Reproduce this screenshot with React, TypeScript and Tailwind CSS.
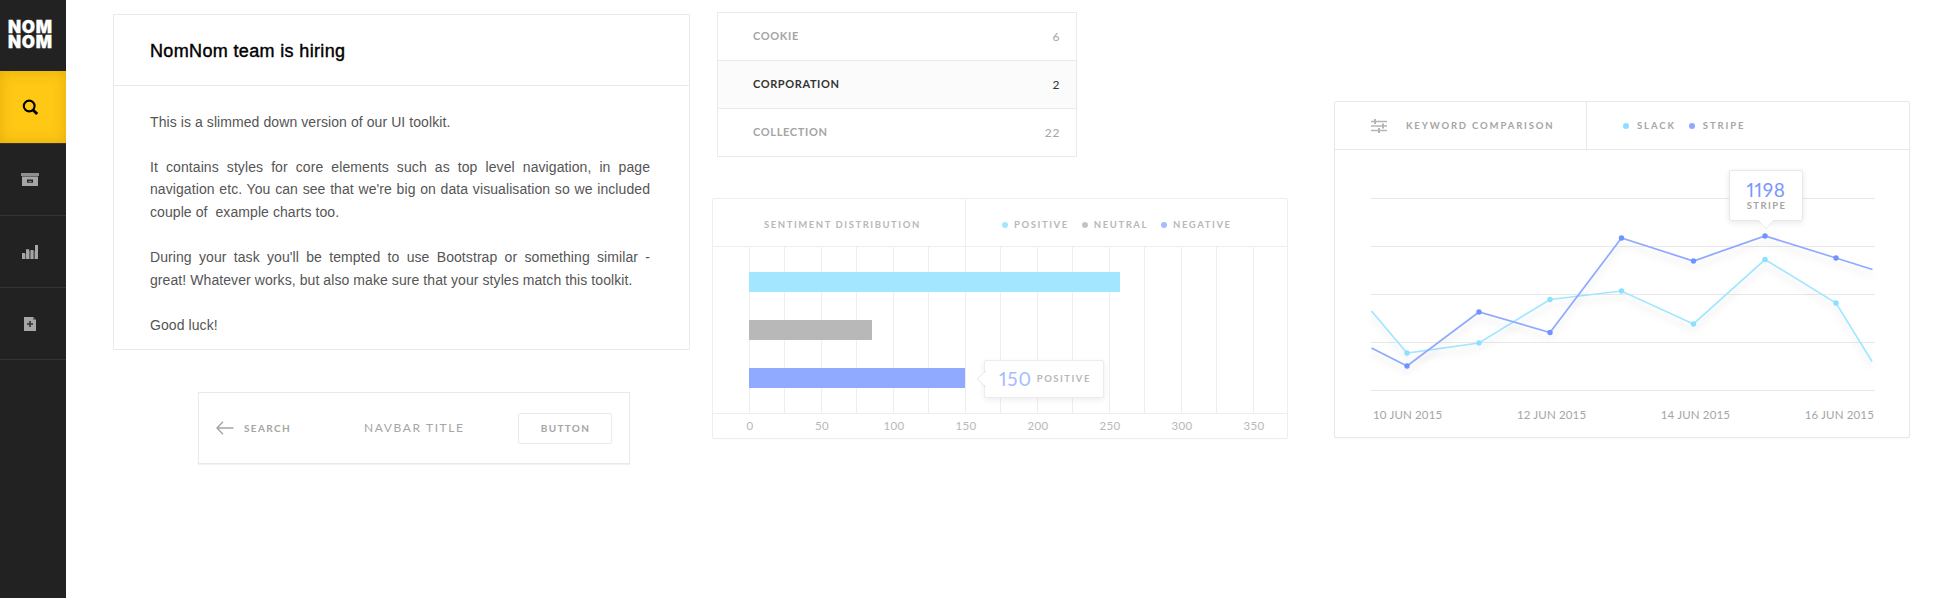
import React from "react";

type NavItem = { icon: React.ReactNode; active?: boolean };

const navItems: NavItem[] = [
  {
    active: true,
    icon: (
      <svg width="17" height="17" viewBox="0 0 17 17" className="block" fill="none" stroke="#000">
        <circle cx="7.2" cy="7" r="5.4" strokeWidth="2.1" />
        <path d="M11 11 15.200 15" strokeWidth="3" />
      </svg>
    ),
  },
  {
    icon: (
      <svg width="18" height="13" viewBox="0 0 18 13" className="block">
        <path d="M0 0h18v3H0z" fill="#8f8f8f" />
        <path d="M1 3h16v10H1z" fill="#a6a6a6" />
        <path d="M1 3h16v1H1z" fill="#666" />
        <path d="M6 6.500h6v3.200H6z" fill="#222" />
        <path d="M7.300 7.900h3.400v1H7.300z" fill="#8a8a8a" />
      </svg>
    ),
  },
  {
    icon: (
      <svg width="16" height="14" viewBox="0 0 16 14" className="block">
        <path d="M3 9h1v5H3zM7 6h1.500v8H7zM11.500 6h1.500v8h-1.500z" fill="#555" />
        <path d="M0 8h3v6H0zM4 4.300h3.200V14H4zM8.500 5h3v9h-3zM13 0h3v14h-3z" fill="#a6a6a6" />
      </svg>
    ),
  },
  {
    icon: (
      <svg width="12" height="14" viewBox="0 0 12 14" className="block">
        <path d="M0 0h9.500v2.500H12V14H0z" fill="#a6a6a6" />
        <path d="M9.500 0 12 2.500H9.500z" fill="#666" />
        <path d="M6 4v6M3 7h6" stroke="#333" strokeWidth="1.600" />
      </svg>
    ),
  },
];

function Sidebar() {
  return (
    <nav className="flex w-[66px] shrink-0 flex-col bg-[#222]">
      <div className="h-[71px] pl-[8px] pt-[20px] font-[Inter,sans-serif] text-[17px] font-black leading-[15px] tracking-[0.7px] text-white [-webkit-text-stroke:0.3px_#fff]">
        NOM
        <br />
        NOM
      </div>
      {navItems.map((item, i) => (
        <div
          key={i}
          className={
            item.active
              ? "flex h-[72px] items-center justify-center bg-[#ffc814] pr-[5px] shadow-[inset_0_0_14px_rgba(160,110,0,0.3)]"
              : "flex h-[72px] items-center justify-center border-t border-[#353535] pr-[6px]"
          }
        >
          {item.icon}
        </div>
      ))}
      <div className="border-t border-[#353535]" />
    </nav>
  );
}

function HiringCard() {
  return (
    <article className="h-[336px] w-[577px] border border-[#eaeaea] font-['Liberation_Sans',Arial,sans-serif]">
      <h1 className="flex h-[71px] items-center border-b border-[#eaeaea] pl-[36px] pt-[2px] text-[18px] font-medium tracking-[0.35px] text-black [-webkit-text-stroke:0.4px_#000]">
        NomNom team is hiring
      </h1>
      <div className="flex w-[536px] flex-col gap-[22.6px] pl-[36px] pt-[24.7px] text-justify text-[14px] leading-[22.6px] tracking-[0.08px] text-[#555]">
        <p>This is a slimmed down version of our UI toolkit.</p>
        <p>
          It contains styles for core elements such as top level navigation, in page navigation etc. You can see that
          we're big on data visualisation so we included couple of&nbsp; example charts too.
        </p>
        <p>
          During your task you'll be tempted to use Bootstrap or something similar&nbsp;-
          great!&nbsp;Whatever works, but also make sure that your styles match this toolkit.
        </p>
        <p>Good luck!</p>
      </div>
    </article>
  );
}

function Navbar() {
  return (
    <header className="ml-[85px] mt-[42px] flex h-[72px] w-[432px] items-center border border-[#eaeaea] px-[17px] text-[#a5a5a5] shadow-[0_1px_1px_rgba(0,0,0,0.05)]">
      <div className="flex w-[148px] items-center gap-[10px]">
        <svg width="18" height="14" viewBox="0 0 18 14" fill="none" stroke="#a5a5a5" strokeWidth="1.4">
          <path d="M17.5 7H1M7 .7 1 7l6 6.300" />
        </svg>
        <span className="text-[10px] font-bold tracking-[1.35px]">SEARCH</span>
      </div>
      <span className="flex-1 text-[12px] tracking-[1.6px]">NAVBAR TITLE</span>
      <button className="h-[31px] w-[94px] rounded-[2px] border border-[#eaeaea] pl-px text-[10px] font-bold tracking-[1.3px]">
        BUTTON
      </button>
    </header>
  );
}

const keywords = [
  { name: "COOKIE", count: 6 },
  { name: "CORPORATION", count: 2, selected: true },
  { name: "COLLECTION", count: 22 },
];

function KeywordList() {
  return (
    <ul className="ml-[5px] h-[145px] w-[360px] divide-y divide-[#eaeaea] border border-[#eaeaea]">
      {keywords.map((k) => (
        <li
          key={k.name}
          className={
            k.selected
              ? "flex h-[48px] items-center justify-between bg-[#fbfbfb] pl-[35px] pr-[16px] text-[11px] tracking-[0.6px] text-[#333]"
              : "flex h-[48px] items-center justify-between pl-[35px] pr-[16px] text-[11px] tracking-[0.65px] text-[#a5a5a5] last:h-[47px]"
          }
        >
          <span className="font-bold">{k.name}</span>
          <span className="text-[12px]">{k.count}</span>
        </li>
      ))}
    </ul>
  );
}

function Legend({ color, label }: { color: string; label: string }) {
  return (
    <span className="flex items-center">
      <i className="mb-[1px] mr-[6px] size-[6px] rounded-full" style={{ backgroundColor: color }} />
      {label}
    </span>
  );
}

const gridX = [37, 72, 109, 144, 181, 216, 253, 288, 325, 360, 397, 432, 469, 504, 541];
const bars = [
  { value: 371, color: "#a2e6ff" },
  { value: 123, color: "#b8b8b8" },
  { value: 216, color: "#90aaff" },
];

function SentimentChart() {
  return (
    <section className="mt-[41px] flex h-[241px] w-[576px] flex-col rounded-[2px] border border-[#eeeeee] text-[#b8b8b8] shadow-[0_1px_2px_rgba(0,0,0,0.02)]">
      <div className="flex h-[48px] shrink-0 border-b border-[#eeeeee] text-[9.5px] font-bold">
        <h2 className="flex w-[253px] items-center border-r border-[#eeeeee] pl-[51px] pt-[5px] tracking-[1.55px]">
          SENTIMENT DISTRIBUTION
        </h2>
        <div className="flex items-center gap-[13px] pl-[36px] pt-[5px] tracking-[1.58px]">
          <Legend color="#a2e6ff" label="POSITIVE" />
          <Legend color="#c4c4c4" label="NEUTRAL" />
          <Legend color="#a6bbff" label="NEGATIVE" />
        </div>
      </div>
      <div className="relative h-[167px] shrink-0 border-b border-[#eeeeee]">
        <svg width="574" height="166" className="absolute inset-0" shapeRendering="crispEdges">
          {gridX.map((x) => (
            <rect key={x} x={x - 1} y="0" width="1" height="166" fill="#eeeeee" />
          ))}
        </svg>
        <div className="relative flex flex-col gap-[28px] pl-[36px] pt-[25px]">
          {bars.map((b) => (
            <div key={b.color} className="h-[20px]" style={{ width: b.value, backgroundColor: b.color }} />
          ))}
        </div>
        <div className="absolute left-[271px] top-[113px] flex h-[38px] w-[120px] items-center rounded-[2px] border border-[#ececec] bg-white pl-[14px] shadow-[0_2px_6px_rgba(0,0,0,0.07)]">
          <svg width="10" height="16" viewBox="0 0 10 16" className="absolute left-[-9px] top-[10px]">
            <path d="M10 0 1 8l9 8" fill="#fff" stroke="#e8e8e8" />
          </svg>
          <span className="text-[19px] font-normal proportional-nums tracking-[0.8px] text-[#a6bbff]">150</span>
          <span className="ml-[5px] text-[9.5px] font-bold tracking-[1.5px]">POSITIVE</span>
        </div>
      </div>
      <div className="flex pl-px pt-[3px] text-[11.5px] leading-[17px] tracking-[0.4px]">
        {[0, 50, 100, 150, 200, 250, 300, 350].map((n) => (
          <span key={n} className="w-[72px] shrink-0 text-center">
            {n}
          </span>
        ))}
      </div>
    </section>
  );
}

const stripe = [
  [37, 199], [72.5, 217], [144.5, 163], [215.5, 183.5], [287, 89], [359, 112], [430.5, 87], [501.5, 109], [538, 120.5],
];
const slack = [
  [37, 162], [72.5, 204], [144.5, 194], [215.5, 150.5], [287, 142], [359, 175], [430.5, 110.5], [501.5, 154], [537.5, 212.5],
];

function Series({ points, line, dot }: { points: number[][]; line: string; dot: string }) {
  return (
    <g transform="translate(-0.5 -1)">
      <polyline
        points={points.map((p) => p.join(",")).join(" ")}
        fill="none"
        stroke={line}
        strokeWidth="1.7"
        filter="url(#drop)"
      />
      {points.slice(1, -1).map(([x, y]) => (
        <circle key={x} cx={x} cy={y} r="2.7" fill={dot} />
      ))}
    </g>
  );
}

function ComparisonChart() {
  return (
    <section className="mt-[101px] h-[337px] w-[576px] shrink-0 rounded-[2px] border border-[#e8e8e8] text-[#a5a5a5] shadow-[0_1px_2px_rgba(0,0,0,0.03)]">
      <div className="flex h-[48px] border-b border-[#e8e8e8] text-[9.5px] font-bold">
        <div className="flex w-[252px] items-center border-r border-[#e8e8e8] pl-[36px]">
          <svg width="16" height="14" viewBox="0 0 16 14" fill="none" stroke="#b5b5b5">
            <path d="M0 2.500h16M0 7h16M0 11.500h16" strokeWidth="1.300" />
            <path d="M4 0v5M12 4.500v5M8 9v5" strokeWidth="2" />
          </svg>
          <h2 className="ml-[19px] pt-px tracking-[1.85px]">KEYWORD COMPARISON</h2>
        </div>
        <div className="flex items-center gap-[13px] pl-[36px] pt-px tracking-[1.9px] [&_i]:mr-[8px]">
          <Legend color="#8ce0ff" label="SLACK" />
          <Legend color="#8ea9ff" label="STRIPE" />
        </div>
      </div>
      <div className="relative h-[255px]">
        <svg width="574" height="255" className="block">
          <defs>
            <filter id="drop" x="-10%" y="-20%" width="120%" height="160%">
              <feDropShadow dx="0" dy="6" stdDeviation="3" floodColor="#000" floodOpacity="0.1" />
            </filter>
          </defs>
          {[48, 96, 144, 192, 240].map((y) => (
            <rect key={y} x="36" y={y} width="504" height="1" fill="#e8e8e8" />
          ))}
          <Series points={slack} line="#a2e6ff" dot="#8ce0ff" />
          <Series points={stripe} line="#8ea9ff" dot="#6f93ff" />
        </svg>
        <div className="absolute left-[394px] top-[20px] flex h-[51px] w-[74px] flex-col items-center rounded-[2px] border border-[#e8e8e8] bg-white pt-[7px] shadow-[0_2px_6px_rgba(0,0,0,0.09)]">
          <span className="text-[19px] leading-[23px] proportional-nums tracking-[0.6px] text-[#7797ff]">1198</span>
          <span className="pl-px text-[9.5px] font-bold leading-[10px] tracking-[1.4px]">STRIPE</span>
          <svg width="16" height="10" viewBox="0 0 16 10" className="absolute left-[28px] top-[49px]">
            <path d="M0 0 8 9l8-9" fill="#fff" stroke="#e8e8e8" />
          </svg>
        </div>
      </div>
      <div className="flex justify-between pl-[38px] pr-[35px] pt-px text-[11.5px] tracking-[0.15px]">
        {["10 JUN 2015", "12 JUN 2015", "14 JUN 2015", "16 JUN 2015"].map((d) => (
          <span key={d}>{d}</span>
        ))}
      </div>
    </section>
  );
}

export default function App() {
  return (
    <div className="flex h-[598px] w-[1949px] overflow-hidden bg-white font-[Lato,sans-serif]">
      <Sidebar />
      <main className="flex items-start pl-[47px]">
        <div className="w-[599px] pt-[14px]">
          <HiringCard />
          <Navbar />
        </div>
        <div className="w-[622px] pt-[12px]">
          <KeywordList />
          <SentimentChart />
        </div>
        <ComparisonChart />
      </main>
    </div>
  );
}
